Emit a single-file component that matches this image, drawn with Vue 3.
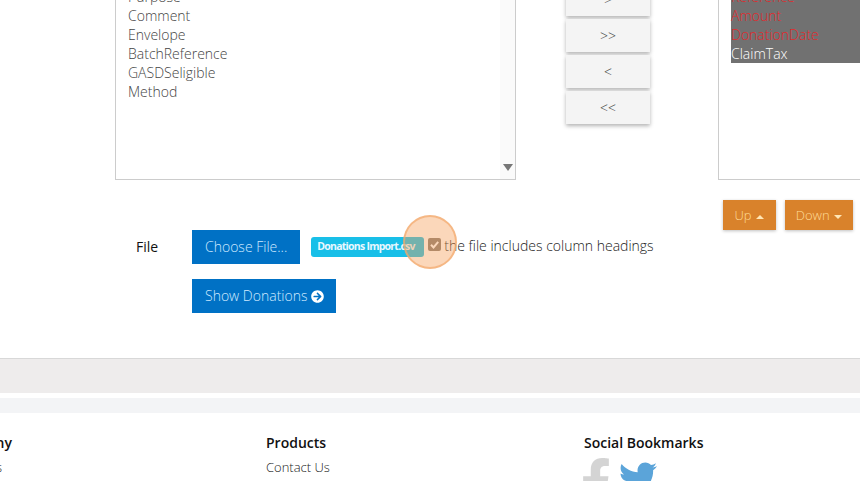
<script setup>
const fields = ['Purpose', 'Comment', 'Envelope', 'BatchReference', 'GASDSeligible', 'Method']
const moves = ['>', '>>', '<', '<<']
const required = ['Reference', 'Amount', 'DonationDate']
</script>

<template>
  <div class="page">
    <div class="picker">
      <div class="list-box">
        <div class="options">
          <div v-for="f in fields" :key="f" class="option">{{ f }}</div>
        </div>
        <div class="scrollbar"><span class="scroll-arrow"></span></div>
      </div>
      <div class="moves">
        <button v-for="m in moves" :key="m" class="move">{{ m }}</button>
      </div>
      <div class="chosen-box">
        <div class="chosen">
          <div v-for="r in required" :key="r" class="option red">{{ r }}</div>
          <div class="option light">ClaimTax</div>
        </div>
      </div>
    </div>

    <div class="order">
      <button class="orange up-btn">Up <span class="caret up"></span></button>
      <button class="orange">Down <span class="caret down"></span></button>
    </div>

    <div class="file-row">
      <label class="file-label">File</label>
      <button class="blue">Choose File...</button>
      <span class="badge">Donations Import.csv</span>
      <span class="check">
        <svg viewBox="0 0 13 13" width="13" height="13"><path d="M3 6.8l2.5 2.6L10.2 3.8" fill="none" stroke="#fff" stroke-width="2"/></svg>
      </span>
      <span class="check-text">the file includes column headings</span>
    </div>
    <div class="show-row">
      <button class="blue show">Show Donations
        <svg class="arrow" viewBox="0 0 512 512" width="13" height="13"><path fill="#fff" d="M256 8c137 0 248 111 248 248S393 504 256 504 8 393 8 256 119 8 256 8zm-28.9 143.6l75.5 72.4H120c-13.3 0-24 10.7-24 24v16c0 13.3 10.7 24 24 24h182.6l-75.5 72.4c-9.7 9.3-9.9 24.8-.4 34.3l11 10.9c9.4 9.4 24.6 9.4 33.9 0L404.3 273c9.4-9.4 9.4-24.6 0-33.9L271.6 106.3c-9.4-9.4-24.6-9.4-33.9 0l-11 10.9c-9.5 9.6-9.3 25.1.4 34.4z"/></svg>
      </button>
    </div>

    <div class="band"></div>
    <div class="band-thin"></div>

    <div class="footer">
      <div class="col company">
        <h4>Company</h4>
        <a>About Us</a>
      </div>
      <div class="col products">
        <h4>Products</h4>
        <a>Contact Us</a>
      </div>
      <div class="col">
        <h4>Social Bookmarks</h4>
        <div class="social">
          <svg class="fb" viewBox="0 0 320 512" width="30" height="48"><path fill="#d4d4d4" d="M279.14 288l14.22-92.66h-88.91v-60.13c0-25.35 12.42-50.06 52.24-50.06h40.42V6.26S260.43 0 225.36 0c-73.22 0-121.08 44.38-121.08 124.72v70.62H22.89V288h81.39v224h100.17V288z"/></svg>
          <svg class="tw" viewBox="0 0 512 512" width="38" height="38"><path fill="#5ba4d9" d="M459.37 151.716c.325 4.548.325 9.097.325 13.645 0 138.72-105.583 298.558-298.558 298.558-59.452 0-114.68-17.219-161.137-47.106 8.447.974 16.568 1.299 25.34 1.299 49.055 0 94.213-16.568 130.274-44.832-46.132-.975-84.792-31.188-98.112-72.772 6.498.974 12.995 1.624 19.818 1.624 9.421 0 18.843-1.3 27.614-3.573-48.081-9.747-84.143-51.98-84.143-102.985v-1.299c13.969 7.797 30.214 12.67 47.431 13.319-28.264-18.843-46.781-51.005-46.781-87.391 0-19.492 5.197-37.36 14.294-52.954 51.655 63.675 129.3 105.258 216.365 109.807-1.624-7.797-2.599-15.918-2.599-24.04 0-57.828 46.782-104.934 104.934-104.934 30.213 0 57.502 12.67 76.67 33.137 23.715-4.548 46.456-13.32 66.599-25.34-7.798 24.366-24.366 44.833-46.132 57.827 21.117-2.273 41.584-8.122 60.426-16.243-14.292 20.791-32.161 39.308-52.628 54.253z"/></svg>
        </div>
      </div>
    </div>

    <div class="spot"></div>
  </div>
</template>

<style scoped>
.page {
  position: relative;
  width: 860px;
  height: 481px;
  overflow: hidden;
  background: #fff;
  font-family: "Open Sans", sans-serif;
  font-size: 14px;
  color: #333;
}

.picker {
  display: flex;
  align-items: flex-end;
  height: 180px;
  padding-left: 115px;
}
.list-box {
  display: flex;
  box-sizing: border-box;
  width: 401px;
  height: 193px;
  flex: none;
  border: 1px solid #ccc;
  border-top: 0;
}
.options {
  flex: 1;
  padding-left: 12px;
  font-weight: 300;
  color: #444;
}
.option {
  height: 19px;
  line-height: 19px;
}
.scrollbar {
  display: flex;
  align-items: flex-end;
  justify-content: center;
  width: 15px;
  background: #fafafa;
  padding-bottom: 8px;
  box-sizing: border-box;
}
.scroll-arrow {
  border-left: 5px solid transparent;
  border-right: 5px solid transparent;
  border-top: 7px solid #777;
}

.moves {
  display: flex;
  flex-direction: column;
  gap: 3px;
  flex: none;
  width: 84px;
  margin-left: 50px;
  margin-bottom: 56px;
}
.move {
  height: 33px;
  flex: none;
  border: 0;
  padding: 0;
  background: #f4f4f4;
  box-shadow: 0 2px 4px rgba(0, 0, 0, 0.3);
  font-family: inherit;
  font-size: 14px;
  font-weight: 300;
  color: #444;
}

.chosen-box {
  box-sizing: border-box;
  flex: none;
  width: 200px;
  height: 198px;
  margin-left: 68px;
  padding-left: 12px;
  padding-top: 5px;
  border: 1px solid #ccc;
  border-top: 0;
  font-weight: 300;
}
.chosen {
  background: #717171;
}
.red { color: #e3282c; }
.light { color: #fff; }

.order {
  display: flex;
  justify-content: flex-end;
  gap: 9px;
  padding-right: 7px;
  margin-top: 20px;
  height: 30px;
}
.orange {
  height: 30px;
  border: 0;
  padding: 0 11px;
  background: #d9822b;
  box-shadow: 0 1px 3px rgba(0, 0, 0, 0.25);
  color: #ffdc9a;
  font-family: inherit;
  font-size: 13px;
  font-weight: 300;
}
.up-btn {
  width: 53px;
  padding: 0;
}
.caret {
  display: inline-block;
  vertical-align: middle;
  margin-left: 1px;
  border-left: 4px solid transparent;
  border-right: 4px solid transparent;
}
.caret.up { border-bottom: 4px solid #ffe6b5; }
.caret.down { border-top: 4px solid #ffe6b5; }

.file-row {
  display: flex;
  align-items: center;
  height: 34px;
  padding-left: 136px;
}
.file-label {
  width: 56px;
  margin-top: -1px;
  color: #111;
  font-size: 14px;
}
.blue {
  height: 34px;
  border: 0;
  padding: 0 13px 2px;
  background: #0071c5;
  color: #cfeaff;
  font-family: inherit;
  font-size: 14px;
  font-weight: 300;
  white-space: nowrap;
}
.show {
  padding-right: 12px;
}
.badge {
  display: block;
  box-sizing: border-box;
  width: 113px;
  height: 20px;
  line-height: 19px;
  margin-left: 11px;
  padding-left: 6px;
  border-radius: 3px;
  background: #18bfe8;
  color: #e8f8ff;
  font-size: 10.5px;
  font-weight: 700;
  letter-spacing: -0.75px;
  white-space: nowrap;
}
.check {
  display: block;
  flex: none;
  width: 13px;
  height: 13px;
  margin-left: 4px;
  margin-top: -5px;
  border-radius: 2px;
  background: #857a70;
}
.check svg { display: block; }
.check-text {
  margin-left: 3px;
  margin-top: -3px;
  font-weight: 300;
  color: #222;
  white-space: nowrap;
}

.show-row {
  padding-left: 192px;
  margin-top: 15px;
  height: 34px;
}
.arrow {
  vertical-align: -2px;
}

.band {
  height: 34px;
  margin-top: 45px;
  border-top: 1px solid #d8d8d8;
  background: #eeecec;
}
.band-thin {
  height: 15px;
  margin-top: 5px;
  background: #f3f4f6;
}

.footer {
  display: flex;
  margin-left: -56px;
  padding-top: 20px;
}
.col {
  flex: none;
}
.col h4 {
  margin: 0;
  font-size: 14px;
  line-height: 20px;
  font-weight: 600;
  color: #111;
}
.col a {
  display: block;
  margin-top: 4px;
  line-height: 20px;
  font-size: 13px;
  font-weight: 300;
  color: #222;
}
.company { width: 322px; }
.company h4 { padding-left: 4px; }
.company a { padding-left: 4px; }
.products { width: 318px; }
.social {
  display: flex;
  align-items: flex-start;
  margin-top: 5px;
}
.fb {
  flex: none;
  margin-left: -3px;
}
.tw {
  flex: none;
  margin-left: 8px;
  margin-top: 1px;
}

.spot {
  position: absolute;
  left: 403px;
  top: 215px;
  width: 54px;
  height: 54px;
  box-sizing: border-box;
  border-radius: 50%;
  background: rgba(246, 160, 90, 0.42);
  border: 2px solid rgba(244, 170, 110, 0.7);
}
</style>
